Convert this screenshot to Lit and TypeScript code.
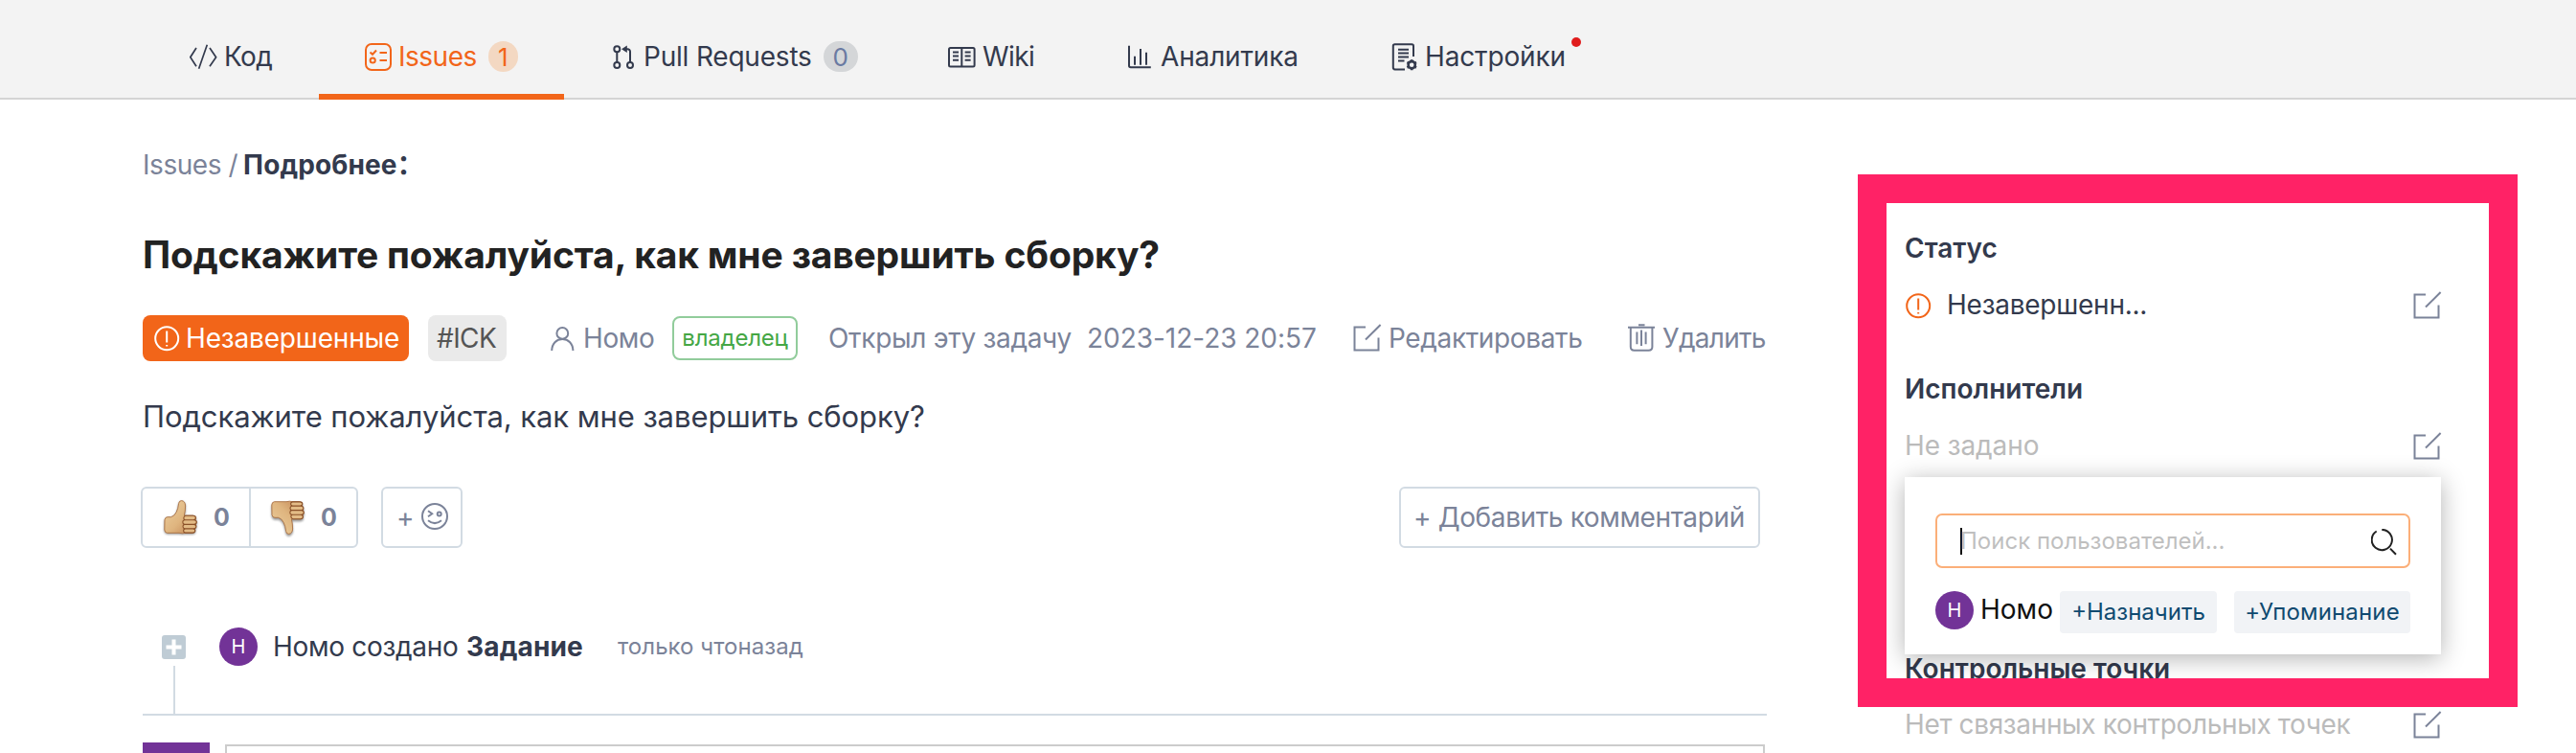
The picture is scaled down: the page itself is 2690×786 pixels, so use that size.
import { LitElement, html, svg, css, nothing } from "lit";
import { customElement, property } from "lit/decorators.js";
import { classMap } from "lit/directives/class-map.js";

const glyphs: Record<string, { w: number; h: number; art: unknown }> = {
  code: { w: 29, h: 29, art: svg`<path stroke-width="1.7" d="M7 5 .8 14.7 7 24.3M21 5l6.6 9.7-6.6 9.6M18.3 1.7 9.6 26.7"/>` },
  issues: { w: 28, h: 29, art: svg`<rect x="1" y="1" width="26" height="27" rx="6"/><path d="M5.5 9.5 8 11.8l4-4.3M15.5 10H23M15.5 18H23"/><circle cx="8.2" cy="18" r="2.6"/>` },
  pull: { w: 28, h: 29, art: svg`<circle cx="7.3" cy="6.3" r="3"/><circle cx="7.3" cy="23" r="3"/><circle cx="21" cy="23" r="3"/><path d="M7.3 9.5V20M14 6.3h4.5a2.5 2.5 0 0 1 2.5 2.5V20"/><path fill="currentColor" stroke="none" d="M12 6.3 17.8 2.6V10z"/>` },
  wiki: { w: 29, h: 29, art: svg`<rect x="1" y="5" width="26.6" height="19.4" rx="1.5"/><path d="M14.3 5v19M5 9.5h6M5 13.5h6M5 17.8h6M17.6 9.5h6M17.6 13.5h6M17.6 17.8h6"/>` },
  chart: { w: 28, h: 29, art: svg`<path d="M3 2.7v20.8q0 1.8 1.8 1.8h21M9 13.7v9M15 6v16.7M21 9.7v13"/>` },
  settings: { w: 28, h: 29, art: svg`<path d="M23 14V3q0-1.8-1.8-1.8H3.6Q1.8 1.2 1.8 3v22.6q0 1.8 1.8 1.8H14M7 6.8h11M7 10.6h11M7 14.6h11M7 18.5h6.5"/><circle cx="21.2" cy="22.7" r="3.6" stroke-width="2.6"/><path stroke-width="2.6" d="M21.2 17.2v1.4M21.2 26.8v1.4M16.4 20l1.3.7M24.7 24.8l1.3.7M16.4 25.5l1.3-.7M24.7 20.7l1.3-.7"/>` },
  alert: { w: 27, h: 27, art: svg`<circle cx="13.2" cy="13.2" r="12"/><path d="M13.2 5.4v12.2M13.2 20v1.6"/>` },
  user: { w: 25, h: 27, art: svg`<circle cx="12.3" cy="7.9" r="5.9"/><path d="M1.2 26C1.4 18.500 6 14 12.300 14S23.200 18.500 23.400 26"/>` },
  edit: { w: 30, h: 29, art: svg`<path d="M13 3.500H1.500V27.600H26.500V14.500M28.600 1 13 16.500"/>` },
  trash: { w: 29, h: 29, art: svg`<path d="M0 3.700h28M11 1.200h6.500M2.800 4v20q0 3.800 3.800 3.800h15q3.800 0 3.800-3.800V4M9.400 8.500v12.800M14 6.500v16.600M18.600 8.500v12.800"/>` },
  smile: { w: 28, h: 28, art: svg`<circle cx="14" cy="14" r="13"/><path d="M7 8.300 11.200 11.300 7 14.300M7 18.300Q14 24 21 18.300"/><circle cx="18.700" cy="11.500" r="2"/>` },
  search: { w: 28, h: 28, art: svg`<path d="M11.300 .9a10.600 10.600 0 1 1-5.600 1.600M20 20.600 26 26.700"/>` },
};

/** A line icon drawn in the current text colour. */
@customElement("line-icon")
export class LineIcon extends LitElement {
  static styles = css`
    :host { display: block; flex: none; }
    svg { display: block; fill: none; stroke: currentColor; stroke-width: 2; }
  `;
  @property() name = "edit";
  render() {
    const g = glyphs[this.name];
    return html`<svg width=${g.w} height=${g.h} viewBox="0 0 ${g.w} ${g.h}">${g.art}</svg>`;
  }
}

@customElement("thumb-icon")
export class ThumbIcon extends LitElement {
  static styles = css`
    :host { display: block; flex: none; }
    svg { display: block; overflow: visible; filter: drop-shadow(0 1.500px 1px #0006); }
    .down { transform: scaleY(-1); filter: drop-shadow(0 -1.500px 1px #0006); }
  `;
  @property({ type: Boolean }) down = false;
  render() {
    return html`<svg class=${classMap({ down: this.down })} width="36" height="36" viewBox="0 0 36 36">
      <defs>
        <linearGradient id="skin" x1="0" y1="0" x2="1" y2="1">
          <stop offset="0" stop-color="#edd0a0" /><stop offset=".55" stop-color="#dfb57f" /><stop offset="1" stop-color="#bf8050" />
        </linearGradient>
      </defs>
      <path fill="url(#skin)" stroke="#a96f42" stroke-width=".9" d="M1 20.500Q1.500 17.700 4 17.700H7.500Q11 17 13.200 12.500 15 9 15.600 3.500 16 .6 18.600 .6 22.400 1 22.600 6 22.600 11 21.400 16.200H30.500Q33.600 16.800 33 20.300 34.800 22.300 33.300 25 34.200 27.500 32.400 29.500 33 34 29 34.300H22Q20 35.300 16 34.300H3.500Q1 34 .8 31z" />
      <path fill="#e3bb86" stroke="#8a5028" stroke-width="1.100" d="M23 16.300h7.800q2.600 0 2.600 2.200t-2.600 2.200H22.500q-1.800-.2-1.700-2 .3-2.200 2.200-2.400zM21.800 20.800h9.800q2.700.2 2.700 2.300t-2.700 2.200h-9.800q-2-.2-2-2.300 0-2 2-2.200zM21.800 25.400h9.600q2.500.2 2.500 2.200t-2.500 2.200h-9.400q-2-.2-2-2.200 0-2 1.800-2.200zM22.500 29.900h8q2.300.2 2.300 2.100t-2.300 2.100h-8q-1.900-.2-1.900-2.100 0-1.900 1.900-2.100z" />
    </svg>`;
  }
}

const tabs = [
  { cls: "t-code", icon: "code", label: "Код" },
  { cls: "t-issues", icon: "issues", label: "Issues", count: "1", active: true },
  { cls: "t-pull", icon: "pull", label: "Pull Requests", count: "0" },
  { cls: "t-wiki", icon: "wiki", label: "Wiki" },
  { cls: "t-chart", icon: "chart", label: "Аналитика" },
  { cls: "t-settings", icon: "settings", label: "Настройки", dot: true },
];

@customElement("repo-tabs")
export class RepoTabs extends LitElement {
  static styles = css`
    * { box-sizing: border-box; }
    :host { display: block; }
    nav { display: flex; height: 104px; padding-left: 150px; background: #f3f3f3; border-bottom: 2px solid #d4d4d4; color: #333a4d; }
    .tab { display: flex; align-items: center; height: 104px; padding: 14px 0 0 48px; position: relative; line-height: 40px; }
    .tab line-icon { margin-right: 7px; }
    .active { color: #f26519; border-bottom: 6px solid #f26519; padding-top: 20px; }
    .t-code { width: 183px; letter-spacing: -.6px; }
    .t-issues { width: 256px; letter-spacing: -.5px; }
    .t-pull { width: 353px; letter-spacing: -.2px; }
    .t-wiki { width: 186px; letter-spacing: -.6px; }
    .t-chart { width: 277px; letter-spacing: -.15px; }
    .t-chart line-icon { margin-right: 8px; }
    .t-settings { letter-spacing: -.15px; }
    .count { height: 32px; min-width: 31px; padding: 0 9px; margin-left: 12px; border-radius: 16px; background: #f3d8c2; font-size: 26px; line-height: 33px; letter-spacing: 0; text-align: center; }
    .t-pull .count { background: #d4d6d8; color: #6a7aa2; width: 36px; padding: 0; }
    .dot { align-self: flex-start; width: 10px; height: 10px; border-radius: 50%; background: #e01c1c; margin: 25px 0 0 6px; }
  `;
  render() {
    return html`<nav>
      ${tabs.map((t) => html`<div class="tab ${t.cls} ${t.active ? "active" : ""}">
        <line-icon name=${t.icon}></line-icon><span>${t.label}</span>
        ${t.count ? html`<span class="count">${t.count}</span>` : nothing}
        ${t.dot ? html`<i class="dot"></i>` : nothing}
      </div>`)}
    </nav>`;
  }
}

@customElement("issue-detail")
export class IssueDetail extends LitElement {
  static styles = css`
    * { box-sizing: border-box; }
    :host { display: block; white-space: nowrap; line-height: 40px; }
    .crumb { display: flex; height: 40px; margin-top: 48px; color: #7b8399; letter-spacing: -.45px; }
    .crumb b { color: #333a4d; letter-spacing: .1px; margin-left: 6px; }
    .colon { font-family: "Noto Sans CJK SC", sans-serif; line-height: 1; }
    h1 { margin: 44px 0 0; height: 60px; font-size: 39px; line-height: 60px; font-weight: 700; letter-spacing: -.16px; color: #222; }
    .meta { display: flex; align-items: center; height: 48px; margin-top: 33px; color: #7b8399; }
    .state { display: flex; align-items: center; width: 278px; height: 48px; padding-left: 12px; gap: 6px; border-radius: 8px; background: #f26519; color: #fff; letter-spacing: -.17px; }
    .tag { width: 82px; height: 48px; line-height: 49px; margin-left: 20px; padding-left: 9px; border-radius: 8px; background: #eaeaea; color: #555; letter-spacing: -.6px; }
    .author { display: flex; align-items: center; margin-left: 46px; gap: 9px; width: 108px; letter-spacing: -.4px; line-height: 38px; }
    .owner { width: 131px; height: 46px; margin-left: 19px; border: 2px solid #91cc9b; border-radius: 8px; color: #45a745; font-size: 24px; line-height: 42px; text-align: center; letter-spacing: -.2px; }
    .opened { margin-left: 32px; letter-spacing: -.3px; width: 270px; }
    .date { letter-spacing: -.03px; width: 278px; }
    .action { display: flex; align-items: center; gap: 7px; }
    .action line-icon { margin-top: -2px; }
    .rename { width: 287px; letter-spacing: -.36px; }
    .remove { letter-spacing: -.7px; }
    .text { height: 48px; margin-top: 34px; line-height: 48px; font-size: 31px; letter-spacing: -.08px; color: #333a4d; }
    .bar { display: flex; height: 64px; margin: 49px 7px 0 -2px; color: #7b8399; }
    .votes, .react, .comment { display: flex; align-items: center; border: 2px solid #d2dbe3; border-radius: 6px; }
    .vote { display: flex; align-items: center; width: 111px; height: 60px; padding-left: 22px; gap: 16px; font-size: 25px; font-weight: 700; }
    .vote thumb-icon { margin-top: -1px; }
    .vote + .vote { width: 112px; border-left: 2px solid #d2dbe3; padding-left: 21px; }
    .react { width: 85px; margin-left: 24px; padding-left: 14px; gap: 7px; }
    .react line-icon { margin-top: -2px; }
    .comment { width: 377px; margin-left: auto; padding-left: 13px; letter-spacing: -.38px; }
    .event { display: flex; align-items: center; height: 40px; margin-top: 83px; padding-left: 20px; color: #333a4d; }
    .plus { display: block; width: 25px; height: 25px; }
    .avatar { width: 40px; height: 40px; margin-left: 35px; border-radius: 50%; background: #723397; color: #fff; font-size: 20px; text-align: center; }
    .who { margin-left: 16px; letter-spacing: -.3px; line-height: 38px; width: 202px; }
    .event b { letter-spacing: .15px; line-height: 38px; width: 158px; }
    .ago { font-size: 24px; color: #7b8399; line-height: 40px; letter-spacing: .05px; }
    .stem { height: 52px; border-bottom: 2px solid #d2dbe3; padding-left: 32px; }
    .stem i { display: block; width: 2px; height: 50px; background: #d2dbe3; }
    .reply { display: flex; margin-top: 28px; gap: 16px; }
    .me { width: 70px; height: 70px; background: #723397; }
    .editor { width: 1608px; height: 70px; margin-top: 2px; border: 2px solid #ccc; }
  `;
  render() {
    return html`
      <div class="crumb"><span>Issues /</span><b>Подробнее<span class="colon">：</span></b></div>
      <h1>Подскажите пожалуйста, как мне завершить сборку?</h1>
      <div class="meta">
        <div class="state"><line-icon name="alert"></line-icon><span>Незавершенные</span></div>
        <span class="tag">#ICK</span>
        <div class="author"><line-icon name="user"></line-icon><span>Номо</span></div>
        <span class="owner">владелец</span>
        <span class="opened">Открыл эту задачу</span>
        <span class="date">2023-12-23 20:57</span>
        <div class="action rename"><line-icon name="edit"></line-icon><span>Редактировать</span></div>
        <div class="action remove"><line-icon name="trash"></line-icon><span>Удалить</span></div>
      </div>
      <div class="text">Подскажите пожалуйста, как мне завершить сборку?</div>
      <div class="bar">
        <div class="votes">
          <div class="vote"><thumb-icon></thumb-icon><span>0</span></div>
          <div class="vote"><thumb-icon down></thumb-icon><span>0</span></div>
        </div>
        <div class="react"><span>+</span><line-icon name="smile"></line-icon></div>
        <div class="comment">+ Добавить комментарий</div>
      </div>
      <div class="event">
        <svg class="plus" viewBox="0 0 25 25"><rect width="25" height="25" rx="3" fill="#bfccd5" /><path d="M12.500 4.500v16M4.500 12.500h16" stroke="#fff" stroke-width="4" /></svg>
        <span class="avatar">Н</span>
        <span class="who">Номо создано</span><b>Задание</b><span class="ago">только чтоназад</span>
      </div>
      <div class="stem"><i></i></div>
      <div class="reply"><div class="me"></div><div class="editor"></div></div>
    `;
  }
}

@customElement("assignee-picker")
export class AssigneePicker extends LitElement {
  static styles = css`
    * { box-sizing: border-box; }
    :host { display: block; box-sizing: border-box; width: 560px; height: 185px; padding: 38px 32px 0; background: #fff; box-shadow: 0 4px 24px #0000004d; white-space: nowrap; }
    .field { display: flex; align-items: center; width: 496px; height: 57px; border: 2px solid #fbaf79; border-radius: 7px; padding: 0 11px 0 24px; font-size: 24px; color: #bfbfbf; }
    .caret { width: 2px; height: 28px; background: #111; margin-right: -2px; }
    .hint { flex: 1; }
    .field line-icon { color: #222; margin-top: 2px; }
    .user { display: flex; margin-top: 24px; line-height: 40px; color: #111; }
    .avatar { width: 40px; height: 40px; border-radius: 50%; background: #723397; color: #fff; font-size: 20px; text-align: center; }
    .name { width: 83px; margin-left: 7px; line-height: 39px; }
    .btn { height: 44px; line-height: 44px; border-radius: 4px; background: #f1f3f6; color: #0f4a70; font-size: 24px; text-align: center; }
    .assign { width: 164px; }
    .mention { width: 184px; margin-left: 18px; letter-spacing: .15px; }
  `;
  render() {
    return html`
      <div class="field"><i class="caret"></i><span class="hint">Поиск пользователей...</span><line-icon name="search"></line-icon></div>
      <div class="user">
        <span class="avatar">Н</span><span class="name">Номо</span>
        <span class="btn assign">+Назначить</span><span class="btn mention">+Упоминание</span>
      </div>`;
  }
}

@customElement("issue-sidebar")
export class IssueSidebar extends LitElement {
  static styles = css`
    * { box-sizing: border-box; }
    :host { display: block; width: 560px; padding-top: 135px; line-height: 40px; color: #333a4d; white-space: nowrap; }
    section { position: relative; }
    h4 { margin: 0 0 19px; height: 40px; font-size: 28px; font-weight: 600; letter-spacing: 0; }
    .row { display: flex; align-items: center; height: 40px; }
    .row line-icon:first-child { color: #f26519; margin: 2px 16px 0 1px; }
    .edit { margin-left: auto; margin-right: -1px; color: #7b8399; }
    .none { color: #bbb; letter-spacing: -.1px; }
    .wide { letter-spacing: -.36px; }
    .state { letter-spacing: -.25px; }
    .people { margin-top: 48px; }
    .milestones { margin-top: 193px; }
    .milestones h4 { margin-bottom: 18px; }
    assignee-picker { position: absolute; top: 112px; left: 0; z-index: 1; }
  `;
  render() {
    return html`
      <section><h4>Статус</h4>
        <div class="row"><line-icon name="alert"></line-icon><span class="state">Незавершенн...</span><line-icon class="edit" name="edit"></line-icon></div>
      </section>
      <section class="people"><h4>Исполнители</h4>
        <div class="row"><span class="none">Не задано</span><line-icon class="edit" name="edit"></line-icon></div>
        <assignee-picker></assignee-picker>
      </section>
      <section class="milestones"><h4>Контрольные точки</h4>
        <div class="row"><span class="none wide">Нет связанных контрольных точек</span><line-icon class="edit" name="edit"></line-icon></div>
      </section>`;
  }
}

@customElement("app-root")
export class AppRoot extends LitElement {
  static styles = css`
    * { box-sizing: border-box; }
    :host { display: block; position: relative; height: 786px; overflow: hidden; background: #fff; font: 28px Inter, "Open Sans", sans-serif; }
    main { display: grid; grid-template-columns: 1696px 560px; column-gap: 144px; padding-left: 149px; }
    .highlight { position: absolute; z-index: 5; left: 1940px; top: 182px; width: 689px; height: 556px; border: 30px solid #ff2266; }
  `;
  render() {
    return html`
      <repo-tabs></repo-tabs>
      <main><issue-detail></issue-detail><issue-sidebar></issue-sidebar></main>
      <div class="highlight"></div>`;
  }
}
